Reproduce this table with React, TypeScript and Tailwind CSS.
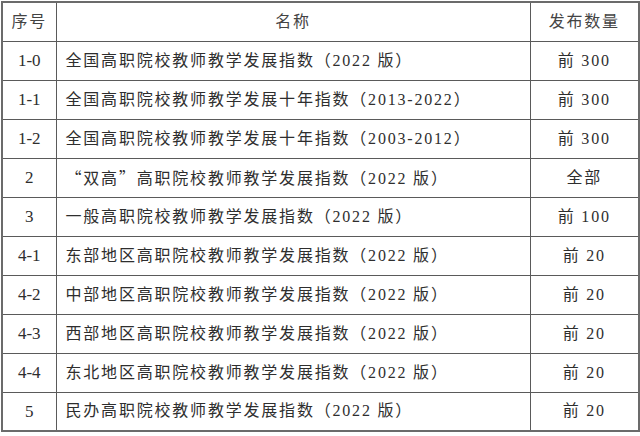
const rows: [string, React.ReactNode, string][] = [
  ["1-0", "全国高职院校教师教学发展指数（2022 版）", "前 300"],
  ["1-1", "全国高职院校教师教学发展十年指数（2013-2022）", "前 300"],
  ["1-2", "全国高职院校教师教学发展十年指数（2003-2012）", "前 300"],
  [
    "2",
    <>
      <span className="[font-family:'Noto_Sans_CJK_SC',sans-serif]">“双高”</span>
      高职院校教师教学发展指数（2022 版）
    </>,
    "全部",
  ],
  ["3", "一般高职院校教师教学发展指数（2022 版）", "前 100"],
  ["4-1", "东部地区高职院校教师教学发展指数（2022 版）", "前 20"],
  ["4-2", "中部地区高职院校教师教学发展指数（2022 版）", "前 20"],
  ["4-3", "西部地区高职院校教师教学发展指数（2022 版）", "前 20"],
  ["4-4", "东北地区高职院校教师教学发展指数（2022 版）", "前 20"],
  ["5", "民办高职院校教师教学发展指数（2022 版）", "前 20"],
];

const cell = "border border-[#5a5a5a]";

export default function App() {
  return (
    <div className="w-[640px] h-[436px] bg-white pt-px pl-px">
      <table className="w-[637px] border-collapse border-2 border-[#6b6b6b] text-[16px] text-[#2e2e2e] tracking-[1.8px] table-fixed [font-family:'Liberation_Serif','Noto_Sans_CJK_SC',serif]">
        <colgroup>
          <col className="w-[54px]" />
          <col className="w-[474px]" />
          <col className="w-[109px]" />
        </colgroup>
        <thead>
          <tr className="h-[39px]">
            <th className={`${cell} font-normal text-center text-[#444]`}>序号</th>
            <th className={`${cell} font-normal text-center text-[#444]`}>名称</th>
            <th className={`${cell} font-normal text-center text-[#444]`}>发布数量</th>
          </tr>
        </thead>
        <tbody>
          {rows.map(([id, name, count]) => (
            <tr key={id} className="h-[39px]">
              <td className={`${cell} text-center tracking-normal text-[17px]`}>{id}</td>
              <td className={`${cell} pl-[9px] whitespace-nowrap`}>{name}</td>
              <td className={`${cell} text-center`}>{count}</td>
            </tr>
          ))}
        </tbody>
      </table>
    </div>
  );
}
